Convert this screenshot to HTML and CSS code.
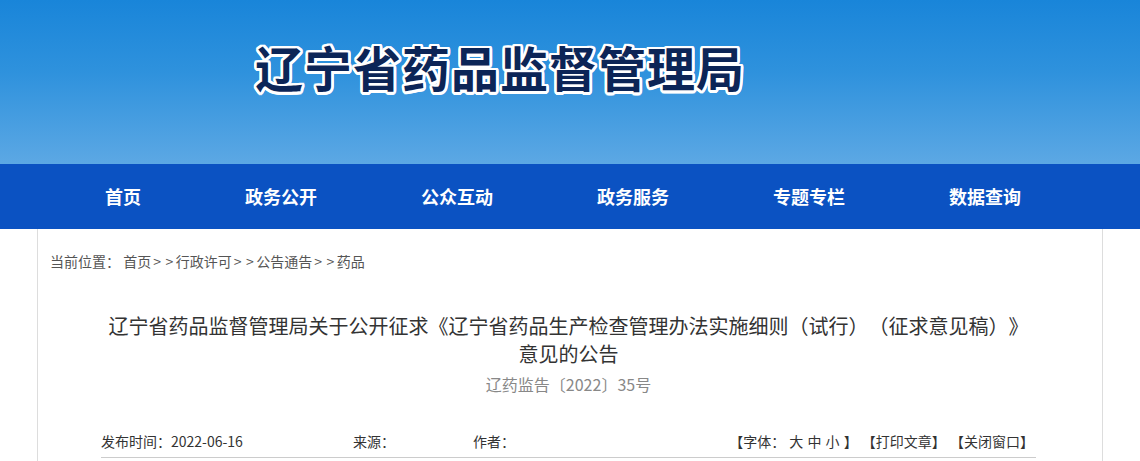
FILE: index.html
```html
<!DOCTYPE html>
<html lang="zh-CN">
<head>
<meta charset="utf-8">
<title>辽宁省药品监督管理局</title>
<link rel="stylesheet" href="styles.css">
</head>
<body>
<header class="banner">
  <h1 class="site-title">辽宁省药品监督管理局</h1>
</header>
<nav class="nav">
  <a class="nav-item" href="#">首页</a>
  <a class="nav-item" href="#">政务公开</a>
  <a class="nav-item" href="#">公众互动</a>
  <a class="nav-item" href="#">政务服务</a>
  <a class="nav-item" href="#">专题专栏</a>
  <a class="nav-item" href="#">数据查询</a>
</nav>
<main class="content">
  <div class="crumbs">当前位置： <a href="#">首页</a><span class="sep">&gt;&gt;</span><a href="#">行政许可</a><span class="sep">&gt;&gt;</span><a href="#">公告通告</a><span class="sep">&gt;&gt;</span><a href="#">药品</a></div>
  <div class="article">
    <h2 class="title">辽宁省药品监督管理局关于公开征求《辽宁省药品生产检查管理办法实施细则（试行）（征求意见稿）》意见的公告</h2>
    <div class="docno">辽药监告〔2022〕35号</div>
    <div class="meta">
      <div class="meta-left">
        <span class="date">发布时间：2022-06-16</span>
        <span class="source">来源：</span>
        <span class="author">作者：</span>
      </div>
      <div class="meta-right">【字体： <a href="#">大</a> <a href="#">中</a> <a href="#">小</a> 】 【<a href="#">打印文章</a>】 【<a href="#">关闭窗口</a>】</div>
    </div>
  </div>
</main>
</body>
</html>
```
FILE: styles.css
```css
html, body {
  margin: 0;
  padding: 0;
  background: #fff;
}
body {
  font-family: "Noto Sans CJK SC", "Microsoft YaHei", sans-serif;
  color: #333;
  overflow: hidden;
  text-spacing-trim: space-all;
}
a {
  color: inherit;
  text-decoration: none;
}
.banner {
  height: 164px;
  background: linear-gradient(to bottom, #1985d9 0%, #2f92dd 45%, #5ca8e4 100%);
  display: flex;
  align-items: flex-start;
}
.site-title {
  margin: 36px 0 0 255px;
  font-size: 48px;
  line-height: 60px;
  font-weight: 700;
  letter-spacing: 1px;
  color: #0c2557;
  text-shadow:
    2.5px 0 0 #fff, -2.5px 0 0 #fff, 0 2.5px 0 #fff, 0 -2.5px 0 #fff,
    2px 2px 0 #fff, -2px 2px 0 #fff, 2px -2px 0 #fff, -2px -2px 0 #fff,
    2.5px 1px 0 #fff, -2.5px 1px 0 #fff, 2.5px -1px 0 #fff, -2.5px -1px 0 #fff,
    1px 2.5px 0 #fff, -1px 2.5px 0 #fff, 1px -2.5px 0 #fff, -1px -2.5px 0 #fff;
}
.nav {
  height: 65px;
  background: #0b52c2;
  display: flex;
  padding-left: 53px;
}
.nav-item {
  padding: 0 52px;
  line-height: 65px;
  color: #fff;
  font-size: 18px;
  font-weight: 700;
}
.content {
  width: 1066px;
  box-sizing: border-box;
  margin: 0 auto;
  border-left: 1px solid #ddd;
  border-right: 1px solid #ddd;
  min-height: 240px;
}
.crumbs {
  padding: 22px 0 0 12px;
  font-size: 14px;
  line-height: 20px;
  color: #555;
}
.sep {
  letter-spacing: 4.5px;
  padding-left: 2px;
  margin-right: -2px;
}
.article {
  width: 935px;
  margin: 41px 0 0 63px;
}
.title {
  margin: 0;
  font-size: 20px;
  font-weight: 400;
  line-height: 28px;
  text-align: center;
  color: #333;
}
.docno {
  margin-top: 4px;
  font-size: 16px;
  line-height: 24px;
  text-align: center;
  color: #888;
}
.meta {
  margin-top: 35px;
  display: flex;
  justify-content: space-between;
  font-size: 14px;
  line-height: 20px;
  padding-bottom: 6px;
  border-bottom: 1px solid #ccc;
}
.meta-left {
  display: flex;
}
.date {
  width: 252px;
}
.source {
  width: 120px;
}
.meta-right {
  font-size: 14px;
  color: #333;
  padding-right: 2px;
  word-spacing: 1px;
}
```
